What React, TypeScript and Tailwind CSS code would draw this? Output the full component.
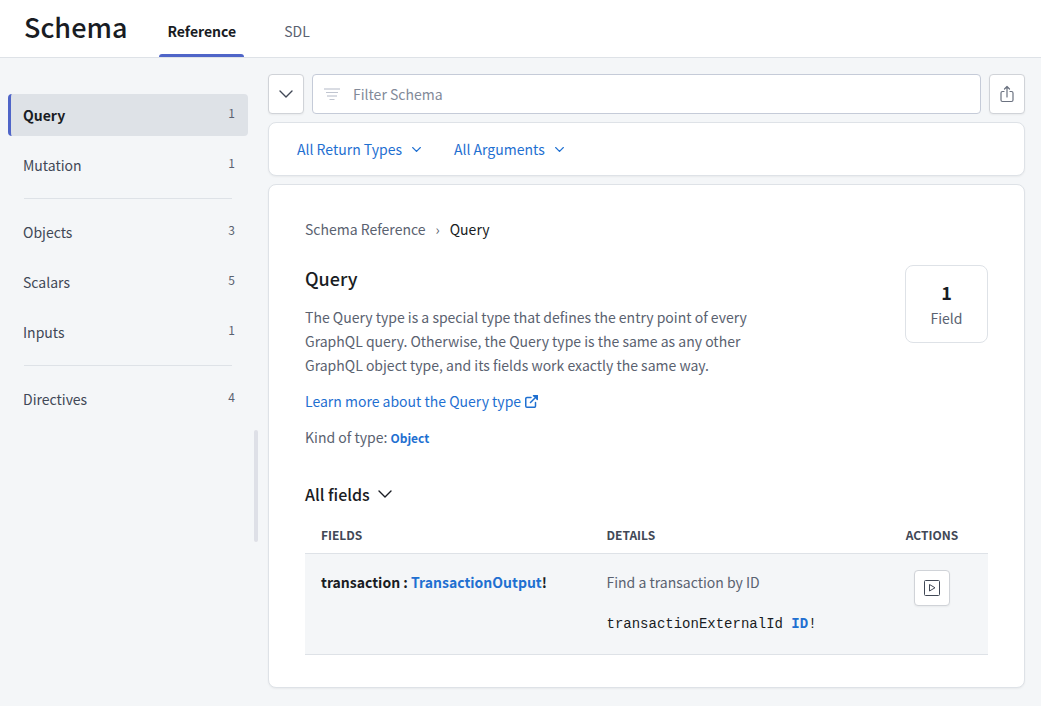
import React from 'react';

type NavItem = { label: string; count: number; active?: boolean };

const navGroups: NavItem[][] = [
  [
    { label: 'Query', count: 1, active: true },
    { label: 'Mutation', count: 1 },
  ],
  [
    { label: 'Objects', count: 3 },
    { label: 'Scalars', count: 5 },
    { label: 'Inputs', count: 1 },
  ],
  [{ label: 'Directives', count: 4 }],
];

function ChevronDown({ className }: { className: string }) {
  return (
    <svg viewBox="0 0 14 8" fill="none" stroke="currentColor" strokeLinecap="round" strokeLinejoin="round" className={className} aria-hidden="true">
      <path d="M1 1l6 6 6-6" vectorEffect="non-scaling-stroke" strokeWidth="1.4" />
    </svg>
  );
}

function FilterIcon() {
  return (
    <svg viewBox="0 0 16 12" className="h-3 w-4" fill="none" aria-hidden="true">
      <path d="M0 1h16M3 8h10" stroke="#d9dce3" strokeWidth="2" />
      <path d="M2 4.500h12M5.500 11.500h5" stroke="#c0c5d0" />
    </svg>
  );
}

function ShareIcon() {
  return (
    <svg viewBox="0 0 14 18" className="h-[18px] w-[14px]" fill="none" stroke="#6b7280" strokeWidth="1.200" strokeLinecap="round" strokeLinejoin="round" aria-hidden="true">
      <path d="M4 6.500H2.500a1.500 1.500 0 0 0-1.500 1.500v7A1.500 1.500 0 0 0 2.500 16.500h9a1.500 1.500 0 0 0 1.500-1.500V8a1.500 1.500 0 0 0-1.500-1.500H10" />
      <path d="M7 12V1.500M4.500 4L7 1.500 9.500 4" />
    </svg>
  );
}

function ExternalIcon() {
  return (
    <svg viewBox="0 0 13 13" className="h-[13px] w-[13px]" fill="none" stroke="currentColor" strokeWidth="1.500" strokeLinecap="round" strokeLinejoin="round" aria-hidden="true">
      <path d="M6 2.500H2A1.250 1.250 0 0 0 .75 3.750V11A1.250 1.250 0 0 0 2 12.250h7.250A1.250 1.250 0 0 0 10.500 11V7.500" />
      <path d="M8.500.75h3.750V4.500M12 1L5.500 7.500" />
      <path d="M9 .75h3.250V4z" fill="currentColor" />
    </svg>
  );
}

function PlayIcon() {
  return (
    <svg viewBox="0 0 16 16" className="h-4 w-4" fill="none" stroke="#414856" strokeLinejoin="round" aria-hidden="true">
      <rect x=".5" y=".5" width="15" height="15" rx="1" />
      <path d="M5.500 4.500v6.500l5.500-3.250z" />
    </svg>
  );
}

export default function App() {
  return (
    <div className="flex min-h-screen flex-col bg-[#f4f6f8] font-['Noto_Sans_CJK_SC',sans-serif] text-[14px] leading-6 text-[#5a6270]">
      <header className="flex h-[58px] border-b border-[#dee2e7] bg-white pl-6">
        <h1 className="pt-[7px] text-[27px] leading-10 font-medium text-[#191c23]">Schema</h1>
        <nav className="ml-8 flex gap-8" aria-label="Schema views">
          <a href="#reference" aria-current="page" className="flex flex-col justify-between px-2 pt-[19px] font-bold text-[#191c23]">
            Reference
            <span className="-mx-2 h-[3px] rounded-t-sm bg-[#4f65c8]" />
          </a>
          <a href="#sdl" className="px-2 pt-[19px]">SDL</a>
        </nav>
      </header>

      <div className="flex flex-1 pr-4 pl-2">
        <aside className="w-60 shrink-0 pt-9">
          {navGroups.map((group, i) => (
            <React.Fragment key={group[0].label}>
              {i > 0 && <hr className="mx-4 my-3 border-[#dee2e7]" />}
              <ul className="flex flex-col gap-2">
                {group.map((item) => (
                  <li key={item.label}>
                    <a
                      href={'#' + item.label.toLowerCase()}
                      className={
                        item.active
                          ? 'flex h-[42px] justify-between rounded border-l-[3px] border-[#4f65c8] bg-[#dee2e7] pt-[9px] pr-[13px] pl-3 font-bold text-[#191c23]'
                          : 'flex h-[42px] justify-between rounded border-l-[3px] border-transparent pt-[9px] pr-[13px] pl-3 text-[#414856]'
                      }
                    >
                      <span>{item.label}</span>
                      <span className="text-[12px] leading-5 font-normal text-[#5a6270]">{item.count}</span>
                    </a>
                  </li>
                ))}
              </ul>
            </React.Fragment>
          ))}
        </aside>

        <div role="separator" aria-orientation="vertical" className="mt-93 mr-2.5 ml-1.5 h-28 w-1 shrink-0 rounded-sm bg-[#dee0e7]" />

        <main className="flex min-w-0 flex-1 flex-col gap-2 pt-4 pb-4">
          <div className="flex gap-2">
            <button type="button" aria-label="Toggle filters" className="flex h-10 w-9 items-center justify-center rounded border border-[#d0d3d8] bg-white text-[#414856] shadow-xs">
              <ChevronDown className="h-2 w-[14px]" />
            </button>
            <label className="flex h-10 flex-1 items-center gap-[13px] rounded border border-[#c5cbd8] bg-white px-[11px]">
              <FilterIcon />
              <input type="text" aria-label="Filter Schema" placeholder="Filter Schema" className="min-w-0 flex-1 bg-transparent text-[#191c23] outline-none placeholder:text-[#828a99]" />
            </label>
            <button type="button" aria-label="Share" className="flex h-10 w-9 items-center justify-center rounded border border-[#d0d3d8] bg-white shadow-xs">
              <ShareIcon />
            </button>
          </div>

          <div className="flex h-[54px] items-center gap-[33px] rounded-lg border border-[#dee2e7] bg-white px-7 text-[#1f70d1] shadow-xs">
            <button type="button" className="flex items-center gap-2.5">
              All Return Types
              <ChevronDown className="h-[5px] w-[9px]" />
            </button>
            <button type="button" className="flex items-center gap-2.5">
              All Arguments
              <ChevronDown className="h-[5px] w-[9px]" />
            </button>
          </div>

          <section className="rounded-lg border border-[#dee2e7] bg-white px-9 pt-8 pb-8 shadow-xs">
            <nav className="flex gap-2.5" aria-label="Breadcrumb">
              <a href="#schema">Schema Reference</a>
              <span>›</span>
              <span className="text-[#191c23]">Query</span>
            </nav>

            <div className="mt-6 flex items-start justify-between">
              <div className="max-w-[460px]">
                <h2 className="text-[18px] leading-[26px] font-medium text-[#191c23]">Query</h2>
                <p className="mt-3.5">
                  The Query type is a special type that defines the entry point of every GraphQL query. Otherwise, the Query type is the same as any other GraphQL object type, and its fields work exactly the same way.
                </p>
                <a href="#learn" className="mt-3 flex items-center gap-1 text-[#1f70d1]">
                  Learn more about the Query type
                  <ExternalIcon />
                </a>
                <p className="mt-3">
                  Kind of type: <a href="#object" className="text-[12px] font-bold text-[#1f70d1]">Object</a>
                </p>
              </div>
              <div className="flex h-[78px] w-[83px] flex-col items-center justify-center rounded-lg border border-[#dee2e7]">
                <span className="text-[18px] leading-7 font-bold text-[#191c23]">1</span>
                <span>Field</span>
              </div>
            </div>

            <button type="button" className="mt-8 flex items-center gap-2 text-[16px] leading-6 font-medium text-[#191c23]">
              All fields
              <ChevronDown className="h-2 w-[14px]" />
            </button>

            <table className="mt-[11px] w-full table-fixed border-collapse text-left">
              <thead>
                <tr className="h-9 border-b border-[#dee2e7] text-[12px] leading-5 text-[#414856]">
                  <th className="px-4 font-bold">FIELDS</th>
                  <th className="px-4 font-bold">DETAILS</th>
                  <th className="w-28 text-center font-bold">ACTIONS</th>
                </tr>
              </thead>
              <tbody>
                <tr className="border-b border-[#dee2e7] bg-[#f4f6f8] align-top">
                  <td className="px-4 py-4 font-bold text-[#191c23]">
                    transaction : <a href="#transaction-output" className="text-[#1f70d1]">TransactionOutput</a>!
                  </td>
                  <td className="px-4 pt-4 pb-[18px]">
                    <p>Find a transaction by ID</p>
                    <p className="mt-[18px] font-['Liberation_Mono',monospace] text-[#191c23]">
                      transactionExternalId <a href="#id" className="font-bold text-[#1f70d1]">ID</a>!
                    </p>
                  </td>
                  <td className="py-4">
                    <button type="button" aria-label="Run in Explorer" className="mx-auto flex h-9 w-9 items-center justify-center rounded border border-[#d0d3d8] bg-white shadow-xs">
                      <PlayIcon />
                    </button>
                  </td>
                </tr>
              </tbody>
            </table>
          </section>
        </main>
      </div>
    </div>
  );
}
